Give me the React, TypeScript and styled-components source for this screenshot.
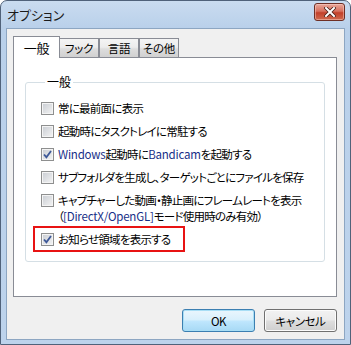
import React from 'react';
import styled, { createGlobalStyle } from 'styled-components';

const GlobalStyle = createGlobalStyle`
    html, body {
        margin: 0;
        padding: 0;
        background: #ffffff;
    }
    body {
        font-family: "Noto Sans CJK JP", "Noto Sans", sans-serif;
        font-size: 12px;
        color: #000;
        font-feature-settings: "palt";
    }
`;

const Window = styled.div`
    width: 351px;
    height: 345px;
    box-sizing: border-box;
    display: flex;
    flex-direction: column;
    border: 1px solid #50627a;
    border-radius: 7px 7px 0 0;
    background: linear-gradient(#cadcf0, #b9d0ea 27px, #bdd3ec);
    padding: 0 5px 4px;
`;

const TitleBar = styled.div`
    height: 27px;
    display: flex;
    align-items: center;
    justify-content: space-between;
    padding-left: 1px;
`;

const Title = styled.span`
    font-size: 13px;
    color: #1b1b1b;
    line-height: 1;
    margin-top: -1px;
`;

const CloseButton = styled.div`
    width: 29px;
    height: 16px;
    margin-top: -5px;
    border: 1px solid #6e2f25;
    border-radius: 3px;
    background: linear-gradient(#e9a89b, #d7705e 45%, #c2402a 55%, #d06a4f);
    box-shadow: inset 0 0 0 1px rgba(255, 220, 210, 0.45);
    display: flex;
    align-items: center;
    justify-content: center;
`;

const Body = styled.div`
    flex: 1;
    display: flex;
    flex-direction: column;
    background: #f0f0f0;
    border: 1px solid #8da6c2;
    padding: 7px 7px 0 6px;
`;

const TabStrip = styled.div`
    display: flex;
    align-items: flex-end;
    height: 22px;
    margin-bottom: -1px;
    position: relative;
    z-index: 1;
`;

const Tab = styled.div<{ $active?: boolean }>`
    box-sizing: border-box;
    display: flex;
    align-items: center;
    justify-content: center;
    border: 1px solid #898c95;
    border-bottom: none;
    width: ${p => (p.$active ? '47px' : '40px')};
    height: ${p => (p.$active ? '22px' : '19px')};
    margin-bottom: ${p => (p.$active ? '0' : '1px')};
    padding-bottom: ${p => (p.$active ? '1px' : '0')};
    font-size: ${p => (p.$active ? '13px' : '11.5px')};
    letter-spacing: -0.3px;
    background: ${p => (p.$active
        ? '#ffffff'
        : 'linear-gradient(#f4f4f4, #ececec 45%, #dddddd 55%, #d1d1d1)')};
    &:nth-child(2) {
        margin-left: -1px;
    }
`;

const Panel = styled.div`
    height: 240px;
    box-sizing: border-box;
    background: #ffffff;
    border: 1px solid #898c95;
    padding: 16px 11px 0;
`;

const Group = styled.fieldset`
    margin: 0;
    border: 1px solid #d5dfe5;
    border-radius: 3px;
    padding: 10px 8px 9px 15px;
    display: flex;
    flex-direction: column;
    gap: 7px;
`;

const Legend = styled.legend`
    line-height: 16px;
    font-size: 12px;
    margin-left: 4px;
    padding: 0 2px;
`;

const Row = styled.div`
    display: flex;
    align-items: flex-start;
    gap: 4px;
    line-height: 16px;
`;

const Label = styled.span`
    white-space: nowrap;
    font-size: 11.5px;
    letter-spacing: -0.75px;
`;

const Accent = styled.span`
    color: #172f88;
    letter-spacing: -0.2px;
`;

const Highlight = styled.div`
    width: 152px;
    box-sizing: border-box;
    margin: -5px 0 0 -8px;
    border: 2px solid #e81313;
    padding: 3px 0 3px 6px;
`;

const Box = styled.span`
    flex: none;
    width: 13px;
    height: 13px;
    box-sizing: border-box;
    margin-top: 2px;
    border: 1px solid #8e8f8f;
    background: linear-gradient(135deg, #c8ccd2, #f4f4f4);
    box-shadow: inset 0 0 0 1px #f4f4f4;
    display: flex;
    align-items: center;
    justify-content: center;
`;

const Footer = styled.div`
    display: flex;
    justify-content: flex-end;
    gap: 9px;
    margin-top: 12px;
`;

const Button = styled.div<{ $default?: boolean }>`
    width: 73px;
    height: 23px;
    box-sizing: border-box;
    border: 1px solid ${p => (p.$default ? '#3c7fb1' : '#707070')};
    border-radius: 3px;
    background: ${p => (p.$default
        ? 'linear-gradient(#eaf6fd, #d9f0fc 45%, #bee6fd 55%, #a7d9f5)'
        : 'linear-gradient(#f2f2f2, #ebebeb 45%, #dddddd 55%, #cfcfcf)')};
    box-shadow: inset 0 0 0 1px ${p => (p.$default ? '#a8def5' : '#fcfcfc')};
    display: flex;
    align-items: center;
    justify-content: center;
    font-size: 11.5px;
    letter-spacing: -0.4px;
`;

const Check = ({ checked }: { checked?: boolean }) => (
    <Box>
        {checked && (
            <svg width="9" height="9" viewBox="0 0 9 9">
                <path d="M1 4.5 L3.4 7.2 L8 1" fill="none" stroke="#3d5898" strokeWidth="1.8" />
            </svg>
        )}
    </Box>
);

const options: { checked?: boolean; content: React.ReactNode }[] = [
    { content: '常に最前面に表示' },
    { content: '起動時にタスクトレイに常駐する' },
    { checked: true, content: <><Accent>Windows</Accent>起動時に<Accent>Bandicam</Accent>を起動する</> },
    { content: 'サブフォルダを生成し、ターゲットごとにファイルを保存' },
    {
        content: (
            <>
                キャプチャーした動画・静止画にフレームレートを表示<br />
                （<Accent>[DirectX/OpenGL]</Accent>モード使用時のみ有効）
            </>
        ),
    },
];

export default function App() {
    return (
        <>
            <GlobalStyle />
            <Window>
                <TitleBar>
                    <Title>オプション</Title>
                    <CloseButton>
                        <svg width="12" height="10" viewBox="0 0 12 10">
                            <path d="M2 1 L10 9 M10 1 L2 9" stroke="#4a2018" strokeWidth="3.6" strokeLinecap="square" />
                            <path d="M2 1 L10 9 M10 1 L2 9" stroke="#ffffff" strokeWidth="2" strokeLinecap="square" />
                        </svg>
                    </CloseButton>
                </TitleBar>
                <Body>
                    <TabStrip>
                        <Tab $active>一般</Tab>
                        <Tab>フック</Tab>
                        <Tab>言語</Tab>
                        <Tab>その他</Tab>
                    </TabStrip>
                    <Panel>
                        <Group>
                            <Legend>一般</Legend>
                            {options.map((o, i) => (
                                <Row key={i}>
                                    <Check checked={o.checked} />
                                    <Label>{o.content}</Label>
                                </Row>
                            ))}
                            <Highlight>
                                <Row>
                                    <Check checked />
                                    <Label>お知らせ領域を表示する</Label>
                                </Row>
                            </Highlight>
                        </Group>
                    </Panel>
                    <Footer>
                        <Button $default>OK</Button>
                        <Button>キャンセル</Button>
                    </Footer>
                </Body>
            </Window>
        </>
    );
}
